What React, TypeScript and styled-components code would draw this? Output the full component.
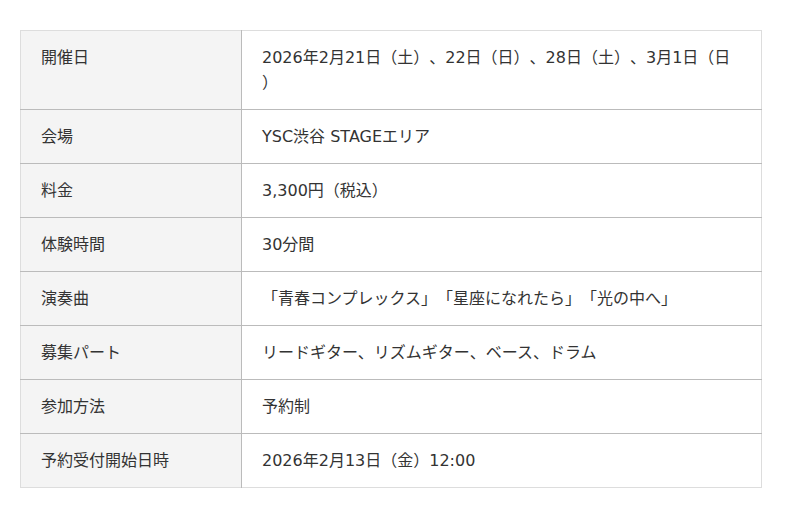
import React from "react";
import styled, { createGlobalStyle } from "styled-components";

const GlobalStyle = createGlobalStyle`
  html, body { margin: 0; padding: 0; background: #ffffff; }
  body {
    font-family: "DejaVu Sans", "Noto Sans CJK JP", sans-serif;
    color: #333333;
    text-spacing-trim: space-all;
  }
`;

const Page = styled.div`
  padding: 30px 38px 30px 20px;
`;

const Table = styled.table`
  width: 742px;
  border-collapse: collapse;
  border: 1px solid #dddddd;
  font-size: 16px;
  line-height: 25px;
  text-spacing-trim: space-all;
`;

const Row = styled.tr`
  & + & > * {
    border-top: 1px solid #bbbbbb;
  }
`;

const Label = styled.th`
  width: 180px;
  background: #f4f4f4;
  font-weight: normal;
  text-align: left;
  vertical-align: top;
  padding: 14px 20px;
  border-right: 1px solid #bbbbbb;
`;

const Value = styled.td`
  vertical-align: top;
  padding: 14px 20px;
  background: #ffffff;
  line-break: anywhere;
`;

const rows: [string, string][] = [
  ["開催日", "2026年2月21日（土）、22日（日）、28日（土）、3月1日（日）"],
  ["会場", "YSC渋谷 STAGEエリア"],
  ["料金", "3,300円（税込）"],
  ["体験時間", "30分間"],
  ["演奏曲", "「青春コンプレックス」「星座になれたら」「光の中へ」"],
  ["募集パート", "リードギター、リズムギター、ベース、ドラム"],
  ["参加方法", "予約制"],
  ["予約受付開始日時", "2026年2月13日（金）12:00"],
];

export default function App() {
  return (
    <>
      <GlobalStyle />
      <Page>
        <Table>
          <tbody>
            {rows.map(([k, v]) => (
              <Row key={k}>
                <Label>{k}</Label>
                <Value>{v}</Value>
              </Row>
            ))}
          </tbody>
        </Table>
      </Page>
    </>
  );
}
